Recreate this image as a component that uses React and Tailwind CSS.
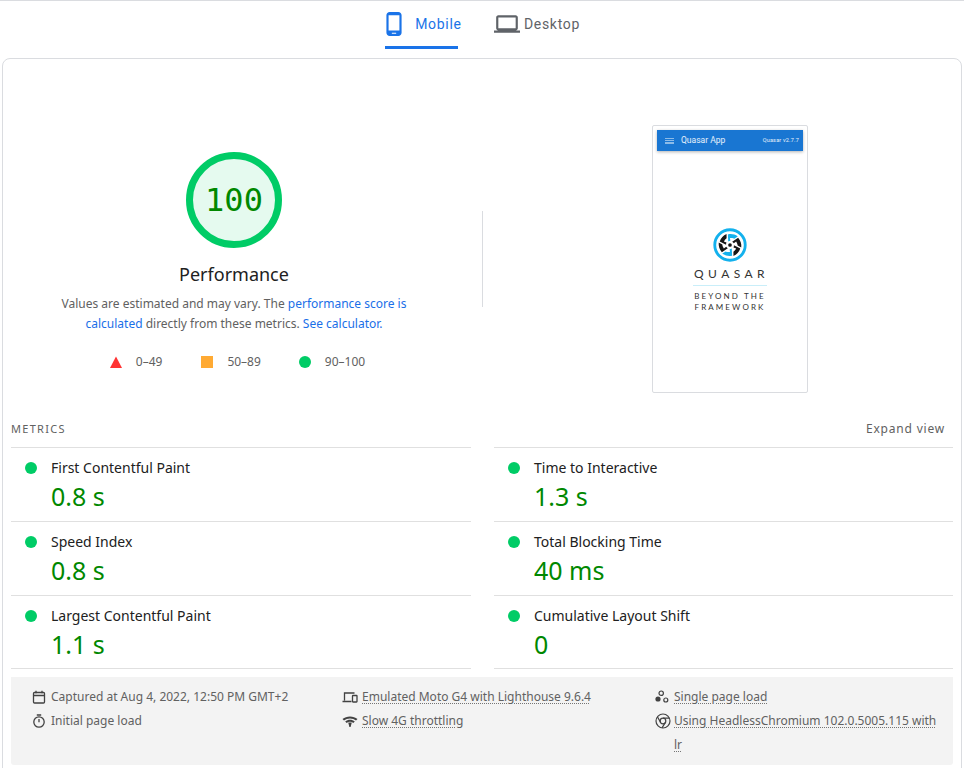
import { MdOutlineLaptop, MdOutlinePhoneAndroid } from 'react-icons/md'

const sans = { fontFamily: '"Noto Sans", "Open Sans", sans-serif' }

const metricsLeft = [
  { label: 'First Contentful Paint', value: '0.8 s' },
  { label: 'Speed Index', value: '0.8 s' },
  { label: 'Largest Contentful Paint', value: '1.1 s' },
]

const metricsRight = [
  { label: 'Time to Interactive', value: '1.3 s' },
  { label: 'Total Blocking Time', value: '40 ms' },
  { label: 'Cumulative Layout Shift', value: '0' },
]

function Tabs() {
  return (
    <div className="flex h-[49px] justify-center border-t border-[#dadce0] pl-[1px] font-['Roboto',sans-serif] text-[14px] font-[450] tracking-[0.7px]">
      <div className="flex h-[48px] w-[73px] items-center justify-center gap-[8px] border-b-[3px] border-[#1a73e8] pt-[1px] text-[#1a73e8]">
        <MdOutlinePhoneAndroid className="h-[26px] w-[26px] shrink-0" />
        Mobile
      </div>
      <div className="ml-[36px] flex h-[48px] items-center gap-[4px] pb-[2px] text-[#5f6368]">
        <MdOutlineLaptop className="h-[26px] w-[26px] shrink-0" />
        Desktop
      </div>
    </div>
  )
}

function Gauge() {
  return (
    <div className="flex h-[96px] w-[96px] items-center justify-center rounded-full border-[7px] border-[#00cc66] bg-[#e5faef] font-['DejaVu_Sans_Mono',monospace] text-[32px] font-light text-[#008800]">
      100
    </div>
  )
}

function Legend() {
  return (
    <div className="mt-[20px] flex items-center pl-[7px] text-[12px] leading-[16px] text-[#616161]">
      <svg width="12" height="12" viewBox="0 0 12 12" className="shrink-0">
        <path d="M6 0.5 12 12H0z" fill="#ff3333" />
      </svg>
      <span className="ml-[14px]">0–49</span>
      <span className="ml-[39px] h-[12px] w-[12px] bg-[#ffaa33]" />
      <span className="ml-[14px]">50–89</span>
      <span className="ml-[38px] h-[12px] w-[12px] rounded-full bg-[#00cc66]" />
      <span className="ml-[14px]">90–100</span>
    </div>
  )
}

// Lighthouse shot of the Quasar splash: ring with six swirl blades
function QuasarMark() {
  const blade = 'M21 9 C26 8 31 9 35 12 L30 15 C28 14 26 14 24 14 L24.5 18 C23.5 18 22.5 18.5 21.5 19 Z'
  return (
    <svg width="34" height="34" viewBox="0 0 48 48">
      <circle cx="24" cy="24" r="21.5" fill="none" stroke="#13b1ed" strokeWidth="4" />
      {[0, 60, 120, 180, 240, 300].map((deg, i) => (
        <path
          key={deg}
          d={blade}
          fill={i % 3 === 0 ? '#13b1ed' : '#161616'}
          transform={`rotate(${deg} 24 24)`}
        />
      ))}
      <circle cx="24" cy="24" r="2.6" fill="#161616" />
    </svg>
  )
}

function Preview() {
  return (
    <div className="flex h-[268px] w-[156px] flex-col items-center rounded-[2px] border border-[#dadce0] bg-white px-[4px] pt-[4px]">
      <div className="flex h-[21px] w-full shrink-0 items-center bg-[#1976d2] pl-[8px] pr-[4px] font-['Roboto',sans-serif] text-white/90 shadow-[0_1px_3px_rgba(0,0,0,0.3)]">
        <div className="flex h-[6px] w-[9px] flex-col justify-between opacity-50">
          <span className="h-[1.5px] bg-white" />
          <span className="h-[1.5px] bg-white" />
          <span className="h-[1.5px] bg-white" />
        </div>
        <span className="ml-[7px] text-[8.5px]">Quasar App</span>
        <span className="ml-auto text-[5.5px] tracking-[0.2px]">Quasar v2.7.7</span>
      </div>
      <div className="mt-[77px] h-[34px]">
        <QuasarMark />
      </div>
      <div className="mt-[5px] pl-[3px] font-['Lato',sans-serif] text-[12px] leading-[13px] tracking-[4.4px] text-[#333333]">
        QUASAR
      </div>
      <div className="mt-[5px] h-px w-[74px] bg-[#c9eef9]" />
      <div className="mt-[5px] text-center font-['Lato',sans-serif] text-[8px] leading-[11px] tracking-[2.1px] text-[#333333]">
        BEYOND THE
        <br />
        FRAMEWORK
      </div>
    </div>
  )
}

function Summary() {
  return (
    <div className="flex items-center pl-[8px]">
      <div className="flex w-[446px] flex-col items-center pt-[3px]">
        <Gauge />
        <h2 className="mt-[12px] text-[18px] leading-[28px] text-[#212121]">Performance</h2>
        <p className="mt-[6px] w-[360px] text-center text-[12px] leading-[20px] text-[#616161]">
          Values are estimated and may vary. The{' '}
          <span className="text-[#1a6fe8]">performance score is calculated</span> directly from these
          metrics. <span className="text-[#1a6fe8]">See calculator.</span>
        </p>
        <Legend />
      </div>
      <div className="ml-[25px] h-[96px] w-px bg-[#dadce0]" />
      <div className="ml-[169px]">
        <Preview />
      </div>
    </div>
  )
}

function Metric({ label, value }) {
  return (
    <div className="h-[74px] border-t border-[#e0e0e0] pl-[14px] pt-[9px] last:h-[73px]">
      <div className="flex items-center text-[14px] leading-[21px] text-[#212121]">
        <span className="h-[12px] w-[12px] shrink-0 rounded-full bg-[#00cc66]" />
        <span className="ml-[14px]">{label}</span>
      </div>
      <div className="mt-[1px] pl-[26px] text-[25px] leading-[34px] text-[#008800]">{value}</div>
    </div>
  )
}

function Metrics() {
  return (
    <div className="pl-[8px] pr-[8px]">
      <div className="mt-[26px] flex h-[28px] items-center justify-between pb-[8px] pr-[8px] text-[12px] tracking-[0.8px] text-[#616161]">
        <span className="text-[11px] tracking-[1.3px]">METRICS</span>
        <span>Expand view</span>
      </div>
      <div className="flex justify-between">
        <div className="w-[460px] border-b border-[#e0e0e0]">
          {metricsLeft.map((m) => (
            <Metric key={m.label} {...m} />
          ))}
        </div>
        <div className="w-[459px] border-b border-[#e0e0e0]">
          {metricsRight.map((m) => (
            <Metric key={m.label} {...m} />
          ))}
        </div>
      </div>
    </div>
  )
}

function CalendarIcon() {
  return (
    <svg width="14" height="14" viewBox="0 0 14 14" fill="none" stroke="#424242" strokeWidth="1.3">
      <rect x="1.5" y="2.5" width="11" height="10.5" rx="1" />
      <path d="M1.5 5.5h11M4 0.8v2.4M10 0.8v2.4" />
    </svg>
  )
}

function TimerIcon() {
  return (
    <svg width="14" height="14" viewBox="0 0 14 14" fill="none" stroke="#424242" strokeWidth="1.3">
      <circle cx="7" cy="8" r="5.2" />
      <path d="M4.8 1h4.4M7 5v3.2" />
    </svg>
  )
}

function DevicesIcon() {
  return (
    <svg width="16" height="14" viewBox="0 0 16 14" fill="none" stroke="#424242" strokeWidth="1.3">
      <path d="M2.5 10.5V3h10M0.5 11.5h9" />
      <rect x="10.5" y="5.5" width="4.5" height="6.5" rx="0.5" />
    </svg>
  )
}

function NetworkIcon() {
  return (
    <svg width="16" height="14" viewBox="0 0 16 14" fill="#424242">
      <path d="M0.5 5C4.5 1.5 11.5 1.5 15.5 5L14 6.5C10.8 3.8 5.2 3.8 2 6.5Z" />
      <path d="M3.2 7.4C6 5.2 10 5.2 12.8 7.4L11.3 8.9C9.4 7.5 6.6 7.5 4.7 8.9Z" />
      <path d="M6.2 8.5h3.6L8.6 13H7.4Z" />
    </svg>
  )
}

function NodesIcon() {
  return (
    <svg width="14" height="14" viewBox="0 0 14 14" fill="none">
      <circle cx="6.2" cy="3.2" r="2.2" stroke="#424242" strokeWidth="1.2" />
      <circle cx="3" cy="9" r="2.6" fill="#424242" />
      <circle cx="10.8" cy="10" r="2" stroke="#424242" strokeWidth="1.2" />
    </svg>
  )
}

function ChromeIcon() {
  return (
    <svg width="16" height="16" viewBox="0 0 16 16" fill="none" stroke="#424242" strokeWidth="1.2">
      <circle cx="8" cy="8" r="7" />
      <circle cx="8" cy="8" r="2.8" />
      <path d="M8 5.2h6.4M5.6 9.4 2.4 3.8M10.4 9.4 7 14.9" />
    </svg>
  )
}

function EnvRow({ icon, text, link, gap = 'w-[19px]' }) {
  return (
    <div className="flex items-start">
      <span className={`flex h-[24px] shrink-0 items-center ${gap}`}>{icon}</span>
      <span
        className={
          link
            ? 'underline decoration-dotted decoration-[#757575] underline-offset-[2px]'
            : ''
        }
      >
        {text}
      </span>
    </div>
  )
}

function RunInfo() {
  return (
    <div className="ml-[8px] mr-[8px] mt-[8px] flex h-[88px] rounded-b-[3px] bg-[#f3f3f3] pl-[21px] pt-[8px] text-[12px] leading-[24px] text-[#616161]">
      <div className="w-[310px]">
        <EnvRow icon={<CalendarIcon />} text="Captured at Aug 4, 2022, 12:50 PM GMT+2" />
        <EnvRow icon={<TimerIcon />} text="Initial page load" />
      </div>
      <div className="w-[313px]">
        <EnvRow icon={<DevicesIcon />} gap="w-[20px]" text="Emulated Moto G4 with Lighthouse 9.6.4" link />
        <EnvRow icon={<NetworkIcon />} gap="w-[20px]" text="Slow 4G throttling" link />
      </div>
      <div className="w-[284px]">
        <EnvRow icon={<NodesIcon />} text="Single page load" link />
        <EnvRow icon={<ChromeIcon />} text="Using HeadlessChromium 102.0.5005.115 with lr" link />
      </div>
    </div>
  )
}

export default function App() {
  return (
    <div className="h-screen overflow-hidden bg-white" style={sans}>
      <Tabs />
      <div className="ml-[2px] mr-[2px] mt-[9px] h-[760px] rounded-[8px] border border-[#dadce0] pt-[66px]">
        <Summary />
        <Metrics />
        <RunInfo />
      </div>
    </div>
  )
}
